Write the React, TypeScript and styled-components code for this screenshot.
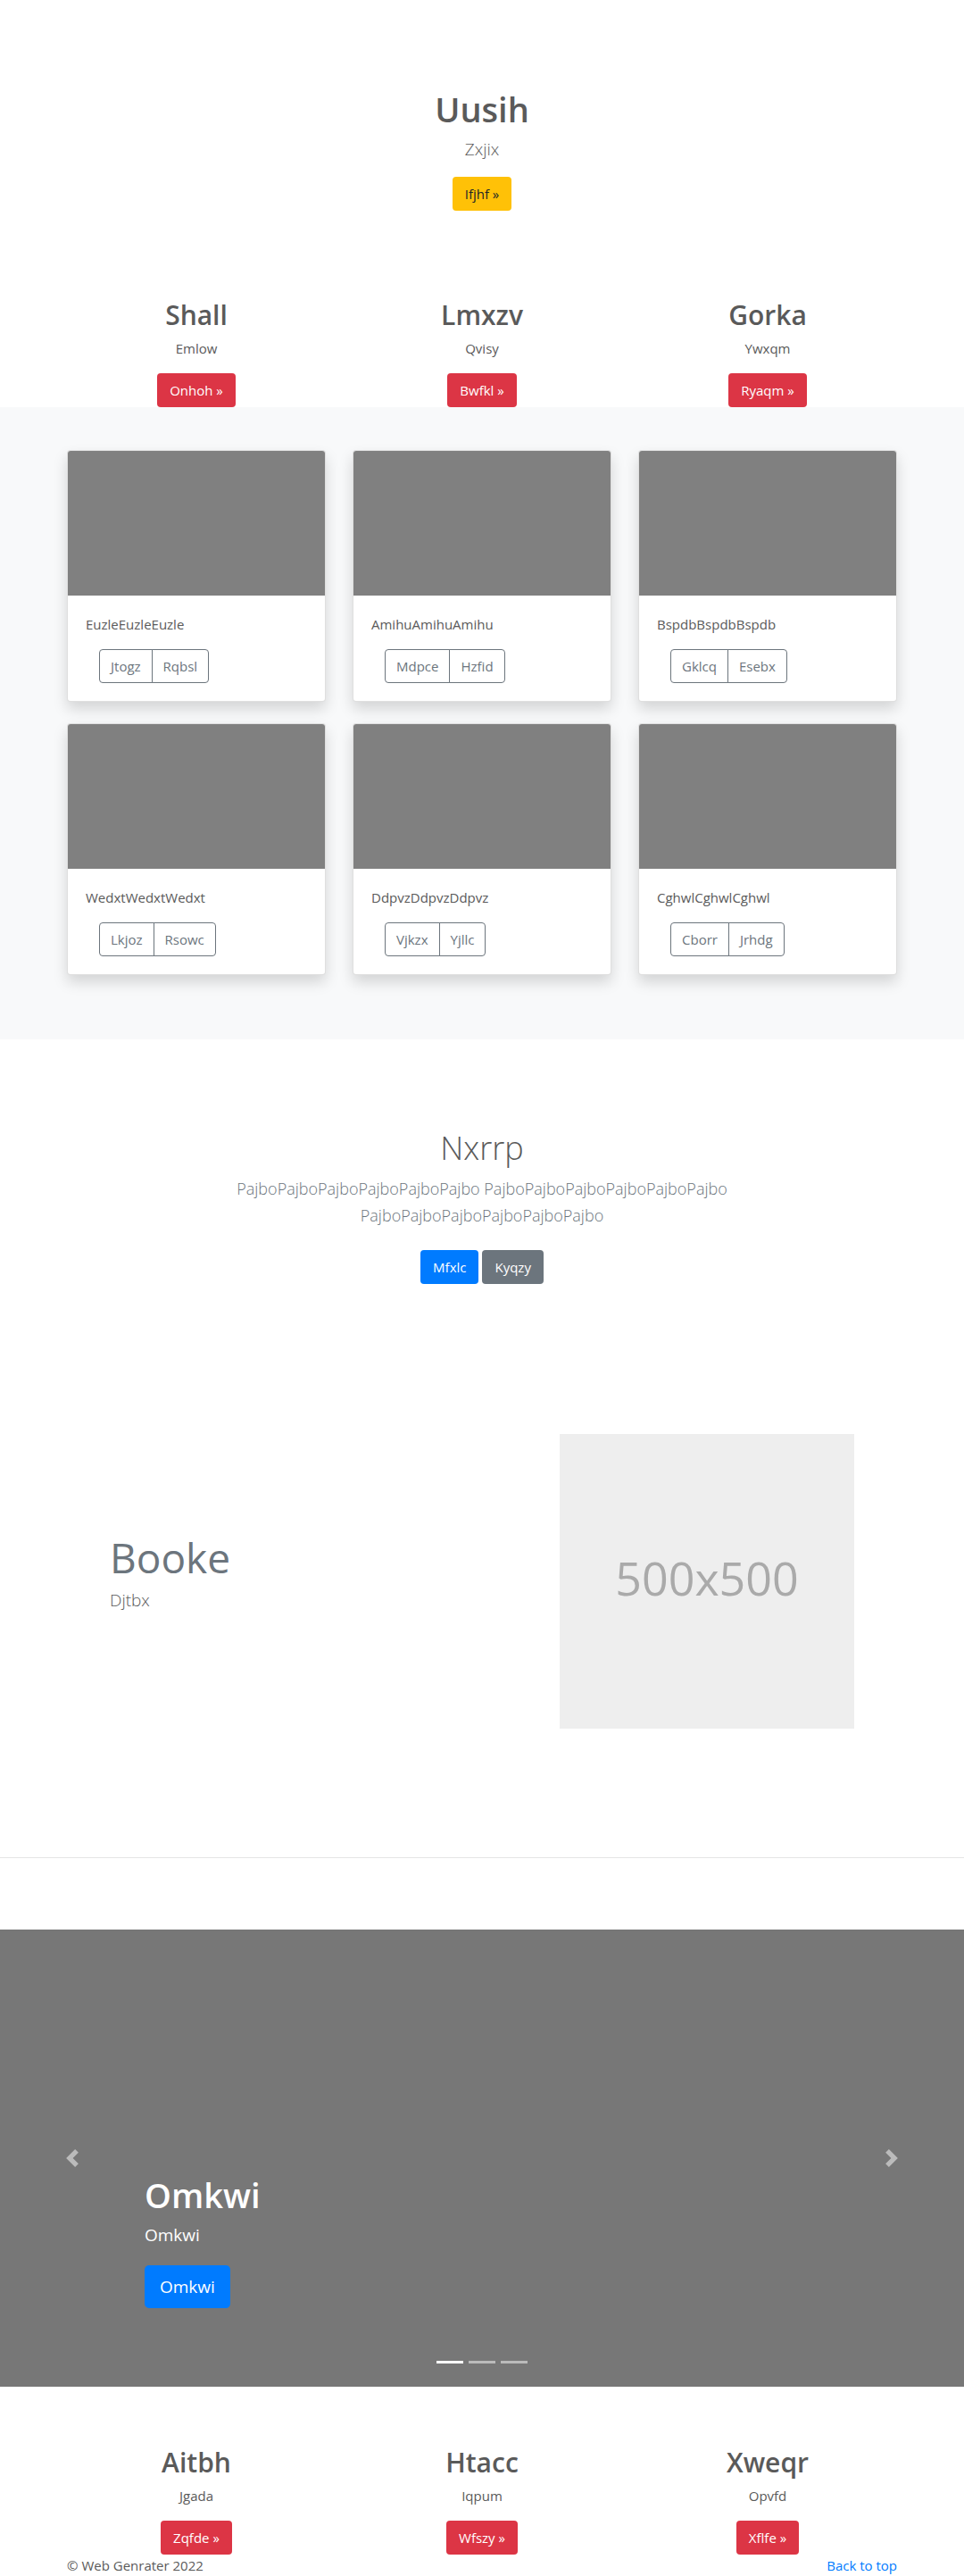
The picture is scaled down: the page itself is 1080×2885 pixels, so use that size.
import React from "react";
import styled, { createGlobalStyle, css } from "styled-components";

const GlobalStyle = createGlobalStyle`
  *, *::before, *::after { box-sizing: border-box; }
  body {
    margin: 0;
    background: #fff;
    color: #5a5a5a;
    font-family: "Open Sans", "Noto Sans", sans-serif;
    font-size: 15px;
    line-height: 24px;
  }
  h1, h2, p { margin: 0; }
  a { text-decoration: none; }
`;

const Container = styled.div`
  width: 100%;
  max-width: 960px;
  margin: 0 auto;
`;

const Hero = styled.header`
  padding: 96px 16px;
  text-align: center;
`;

const Title = styled.h1<{ $light?: boolean }>`
  margin-bottom: 4px;
  font-size: ${(p) => (p.$light ? 36 : 38)}px;
  line-height: 52px;
  font-weight: ${(p) => (p.$light ? 300 : 600)};
`;

const Lead = styled.p<{ $muted?: boolean }>`
  font-size: ${(p) => (p.$muted ? 18 : 19)}px;
  line-height: 30px;
  font-weight: 300;
  color: ${(p) => (p.$muted ? "#6c757d" : "inherit")};
`;

const tones = {
  warning: css`background: #ffc107; color: #212529;`,
  danger: css`background: #dc3545; color: #fff;`,
  primary: css`background: #007bff; color: #fff;`,
  secondary: css`background: #6c757d; color: #fff;`,
};

const LinkButton = styled.a<{ $tone: keyof typeof tones; $large?: boolean }>`
  display: inline-block;
  vertical-align: top;
  border-radius: ${(p) => (p.$large ? 5 : 4)}px;
  padding: ${(p) => (p.$large ? "9px 17px" : "7px 14px")};
  font-size: ${(p) => (p.$large ? 19 : 15)}px;
  line-height: ${(p) => (p.$large ? 30 : 24)}px;
  ${(p) => tones[p.$tone]}
`;

const Actions = styled.div<{ $top: number }>`
  display: flex;
  justify-content: center;
  gap: 4px;
  margin-top: ${(p) => p.$top}px;
`;

const Columns = styled(Container)`
  display: grid;
  grid-template-columns: repeat(3, 1fr);
  text-align: center;
`;

const Column = styled.div`
  padding: 0 15px;
`;

const ColumnTitle = styled.h2`
  margin-bottom: 4px;
  font-size: 30px;
  line-height: 42px;
  font-weight: 600;
`;

const Album = styled.section`
  padding: 48px 0 72px;
  background: #f8f9fa;
`;

const CardGrid = styled(Container)`
  display: grid;
  grid-template-columns: repeat(3, 1fr);
  gap: 24px 30px;
  padding: 0 15px;
`;

const Card = styled.article`
  border: 1px solid rgba(0, 0, 0, 0.125);
  border-radius: 4px;
  background: #fff;
  background-clip: border-box;
  box-shadow: 0 8px 16px rgba(0, 0, 0, 0.15);
`;

const CardImage = styled.div`
  height: 162px;
  border-radius: 3px 3px 0 0;
  background: #808080;
`;

const CardBody = styled.div`
  padding: 20px;
`;

const ButtonGroup = styled.div`
  display: flex;
  margin: 16px 0 0 15px;
`;

const OutlineButton = styled.button`
  border: 1px solid #6c757d;
  padding: 6px 12px;
  background: transparent;
  color: #6c757d;
  font: inherit;
  cursor: pointer;

  &:first-child { border-radius: 4px 0 0 4px; }
  &:last-child { margin-left: -1px; border-radius: 0 4px 4px 0; }
`;

const Intro = styled.section`
  padding: 96px 16px;
  text-align: center;
`;

const IntroText = styled.div`
  max-width: 640px;
  margin: 0 auto;
`;

const Featurette = styled.section`
  display: grid;
  grid-template-columns: 7fr 5fr;
  align-items: center;
  max-width: 864px;
  margin: 0 auto;
  padding: 72px 0 144px;
`;

const FeatureCell = styled.div`
  min-width: 0;
  padding: 0 15px;
`;

const FeatureTitle = styled.h2`
  margin-bottom: 8px;
  font-size: 46px;
  line-height: 50px;
  font-weight: 400;
  color: #6c757d;
`;

const FeatureText = styled(Lead)`
  margin-bottom: 16px;
`;

const Placeholder = styled.div`
  display: flex;
  align-items: center;
  justify-content: center;
  aspect-ratio: 1;
  padding-bottom: 8px;
  background: #eee;
  color: #aaa;
  font-size: 52px;
  line-height: 60px;
`;

const Divider = styled.hr`
  margin: 0 0 80px;
  border: 0;
  border-top: 1px solid rgba(0, 0, 0, 0.1);
`;

const Carousel = styled.section`
  position: relative;
  display: flex;
  align-items: flex-end;
  height: 512px;
  padding: 0 15% 88px;
  background: #777;
  color: #fff;
`;

const CaptionText = styled.p`
  margin-bottom: 19px;
  font-size: 19px;
  line-height: 30px;
`;

const Arrow = styled.button<{ $side: "left" | "right" }>`
  position: absolute;
  top: 0;
  bottom: 0;
  ${(p) => p.$side}: 0;
  display: flex;
  align-items: center;
  justify-content: center;
  width: 15%;
  border: 0;
  padding: 0;
  background: none;
  opacity: 0.5;
  cursor: pointer;
`;

const Indicators = styled.div`
  position: absolute;
  bottom: 26px;
  left: 0;
  right: 0;
  display: flex;
  justify-content: center;
  gap: 6px;
`;

const Indicator = styled.button<{ $active?: boolean }>`
  width: 30px;
  height: 3px;
  border: 0;
  padding: 0;
  background: #fff;
  opacity: ${(p) => (p.$active ? 1 : 0.5)};
  cursor: pointer;
`;

const Closing = styled.section`
  padding-top: 64px;
`;

const Footer = styled.footer`
  display: flex;
  justify-content: space-between;
  max-width: 960px;
  margin: 0 auto;
  padding: 0 15px;

  a { color: #007bff; }
`;

type Item = { title: string; text: string; action: string };

const topItems: Item[] = [
  { title: "Shall", text: "Emlow", action: "Onhoh" },
  { title: "Lmxzv", text: "Qvisy", action: "Bwfkl" },
  { title: "Gorka", text: "Ywxqm", action: "Ryaqm" },
];

const bottomItems: Item[] = [
  { title: "Aitbh", text: "Jgada", action: "Zqfde" },
  { title: "Htacc", text: "Iqpum", action: "Wfszy" },
  { title: "Xweqr", text: "Opvfd", action: "Xflfe" },
];

const cards = [
  { text: "EuzleEuzleEuzle", actions: ["Jtogz", "Rqbsl"] },
  { text: "AmihuAmihuAmihu", actions: ["Mdpce", "Hzfid"] },
  { text: "BspdbBspdbBspdb", actions: ["Gklcq", "Esebx"] },
  { text: "WedxtWedxtWedxt", actions: ["Lkjoz", "Rsowc"] },
  { text: "DdpvzDdpvzDdpvz", actions: ["Vjkzx", "Yjllc"] },
  { text: "CghwlCghwlCghwl", actions: ["Cborr", "Jrhdg"] },
];

const ItemColumns = ({ items }: { items: Item[] }) => (
  <Columns>
    {items.map((item) => (
      <Column key={item.title}>
        <ColumnTitle>{item.title}</ColumnTitle>
        <p>{item.text}</p>
        <Actions $top={16}>
          <LinkButton href="#" $tone="danger">{item.action} »</LinkButton>
        </Actions>
      </Column>
    ))}
  </Columns>
);

export default function App() {
  return (
    <>
      <GlobalStyle />
      <Hero>
        <Title>Uusih</Title>
        <Lead>Zxjix</Lead>
        <Actions $top={16}>
          <LinkButton href="#" $tone="warning">Ifjhf »</LinkButton>
        </Actions>
      </Hero>

      <main>
        <ItemColumns items={topItems} />

        <Album>
          <CardGrid>
            {cards.map((card) => (
              <Card key={card.text}>
                <CardImage />
                <CardBody>
                  <p>{card.text}</p>
                  <ButtonGroup>
                    {card.actions.map((label) => (
                      <OutlineButton key={label} type="button">{label}</OutlineButton>
                    ))}
                  </ButtonGroup>
                </CardBody>
              </Card>
            ))}
          </CardGrid>
        </Album>

        <Intro>
          <IntroText>
            <Title $light>Nxrrp</Title>
            <Lead $muted>
              PajboPajboPajboPajboPajboPajbo PajboPajboPajboPajboPajboPajbo PajboPajboPajboPajboPajboPajbo
            </Lead>
            <Actions $top={24}>
              <LinkButton href="#" $tone="primary">Mfxlc</LinkButton>
              <LinkButton href="#" $tone="secondary">Kyqzy</LinkButton>
            </Actions>
          </IntroText>
        </Intro>

        <Featurette>
          <FeatureCell>
            <FeatureTitle>Booke</FeatureTitle>
            <FeatureText>Djtbx</FeatureText>
          </FeatureCell>
          <FeatureCell>
            <Placeholder>500x500</Placeholder>
          </FeatureCell>
        </Featurette>

        <Divider />

        <Carousel>
          <div>
            <Title>Omkwi</Title>
            <CaptionText>Omkwi</CaptionText>
            <LinkButton href="#" $tone="primary" $large>Omkwi</LinkButton>
          </div>
          <Arrow type="button" $side="left" aria-label="Previous">
            <svg width="20" height="20" viewBox="0 0 8 8" fill="#fff">
              <path d="M5.25 0l-4 4 4 4 1.5-1.5L4.25 4l2.5-2.5L5.25 0z" />
            </svg>
          </Arrow>
          <Arrow type="button" $side="right" aria-label="Next">
            <svg width="20" height="20" viewBox="0 0 8 8" fill="#fff">
              <path d="M2.75 0l-1.5 1.5L3.75 4l-2.5 2.5L2.75 8l4-4-4-4z" />
            </svg>
          </Arrow>
          <Indicators>
            <Indicator type="button" $active aria-label="Slide 1" />
            <Indicator type="button" aria-label="Slide 2" />
            <Indicator type="button" aria-label="Slide 3" />
          </Indicators>
        </Carousel>

        <Closing>
          <ItemColumns items={bottomItems} />
        </Closing>
      </main>

      <Footer>
        <span>© Web Genrater 2022</span>
        <a href="#">Back to top</a>
      </Footer>
    </>
  );
}
